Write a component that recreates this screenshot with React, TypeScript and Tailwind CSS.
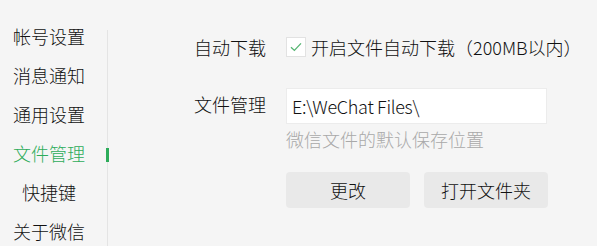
const menu = ["帐号设置", "消息通知", "通用设置", "文件管理", "快捷键", "关于微信"];

export default function App() {
  return (
    <div
      className="flex h-[246px] w-[597px] overflow-hidden bg-[#f5f5f5] text-[18px] font-light text-[#111]"
      style={{ fontFamily: '"Microsoft YaHei", "Noto Sans CJK SC", "Noto Sans", sans-serif' }}
    >
      <div className="flex w-[98px] flex-col pt-[17px]">
        {menu.map((m) => (
          <div
            key={m}
            className={`h-[39px] text-center leading-[39px] ${m === "文件管理" ? "text-[#2dac5a]" : ""}`}
          >
            {m}
          </div>
        ))}
      </div>
      <div className="relative ml-[9px] mt-[30px] w-px bg-[#e4e4e4]">
        <div className="absolute left-[-1px] top-[118px] h-[14px] w-[3px] bg-[#2dac5a]" />
      </div>

      <div className="ml-[86px] flex flex-col pt-[37px]">
        <div className="flex h-[20px] items-center">
          <div className="w-[92px] shrink-0">自动下载</div>
          <div className="flex items-center">
            <div className="flex h-[20px] w-[20px] items-center justify-center border border-[#e2e2e2] bg-white">
              <svg width="12" height="10" viewBox="0 0 12 10" fill="none">
                <path d="M1 5.2 L4.4 8.4 L11 1.4" stroke="#55b572" strokeWidth="1.3" />
              </svg>
            </div>
            <span className="ml-[5px] whitespace-nowrap">开启文件自动下载（200MB以内）</span>
          </div>
        </div>

        <div className="mt-[31px] flex">
          <div className="w-[92px] shrink-0 pt-[3px]">文件管理</div>
          <div className="flex flex-col">
            <div className="flex h-[36px] w-[261px] items-center border border-[#ececec] bg-white pl-[5px] tracking-[-0.3px]">
              E:\WeChat Files\
            </div>
            <div className="mt-[2px] text-[#a9a9a9]">微信文件的默认保存位置</div>
          </div>
        </div>

        <div className="ml-[92px] mt-[19px] flex gap-[14px]">
          <button className="h-[36px] w-[124px] rounded-[4px] bg-[#e9e9e9]">更改</button>
          <button className="h-[36px] w-[124px] rounded-[4px] bg-[#e9e9e9]">打开文件夹</button>
        </div>
      </div>
    </div>
  );
}
